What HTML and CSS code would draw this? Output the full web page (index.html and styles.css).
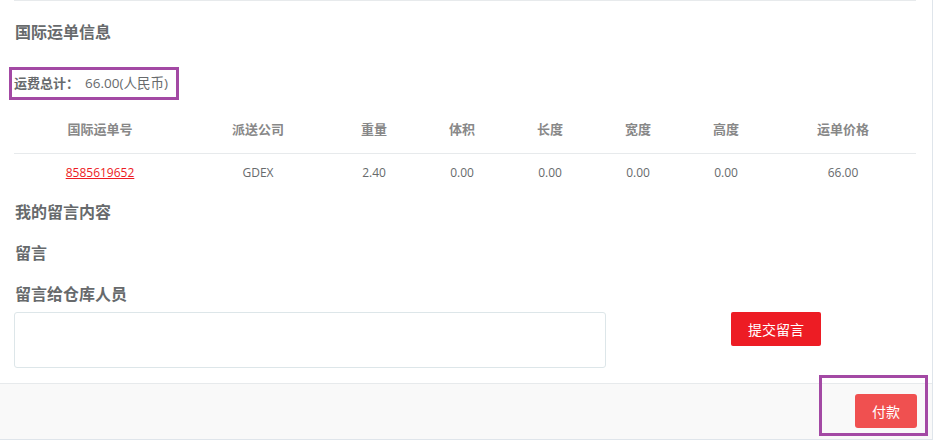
FILE: index.html
```html
<!DOCTYPE html>
<html>
<head>
<meta charset="UTF-8">
<title>国际运单信息</title>
<link rel="stylesheet" href="styles.css">
</head>
<body>

<div id="panel">
	<div class="content">
		<h3 class="first">国际运单信息</h3>
		<p class="total"><b>运费总计：</b><span class="sum">66.00(人民币)</span></p>

		<table class="waybill">
			<thead>
				<tr>
					<th class="c-no">国际运单号</th>
					<th class="c-co">派送公司</th>
					<th class="c-sm">重量</th>
					<th class="c-sm">体积</th>
					<th class="c-sm">长度</th>
					<th class="c-sm">宽度</th>
					<th class="c-sm">高度</th>
					<th class="c-pr">运单价格</th>
				</tr>
			</thead>
			<tbody>
				<tr>
					<td><a href="#">8585619652</a></td>
					<td>GDEX</td>
					<td>2.40</td>
					<td>0.00</td>
					<td>0.00</td>
					<td>0.00</td>
					<td>0.00</td>
					<td>66.00</td>
				</tr>
			</tbody>
		</table>

		<h3>我的留言内容</h3>
		<h3>留言</h3>
		<h3>留言给仓库人员</h3>
		<div class="message">
			<textarea></textarea>
			<button class="btn-submit">提交留言</button>
		</div>
	</div>

	<div class="footer">
		<button class="btn-pay">付款</button>
	</div>
	<!-- marker box drawn over the footer -->
	<div class="mark mark-pay"></div>
</div>

</body>
</html>
```

FILE: styles.css
```css
* {
	box-sizing: border-box;
}
html, body {
	background: #FFF;
	margin: 0;
	padding: 0;
	color: #676a6c;
	font-family: "Open Sans", "Noto Sans CJK SC", sans-serif;
	font-size: 13px;
}
#panel {
	position: relative;
	width: 933px;
	height: 440px;
	border-right: 1px solid #dfe5eb;
	border-bottom: 1px solid #dfe5eb;
}
.content {
	padding: 0 16px 14px 14px;
	height: 383px;
	position: relative;
}
.content:before {
	content: "";
	display: block;
	height: 1px;
	background: #e7eaec;
}
h3 {
	font-size: 16px;
	font-weight: bold;
	line-height: 18px;
	margin: 0 0 23px 1px;
	color: #676a6c;
}
h3.first {
	margin-top: 22px;
	margin-bottom: 26px;
}
.total {
	display: inline-block;
	margin: 0 0 12px -5px;
	padding: 4px 8px 4px 2px;
	border: 3px solid #a349a4;
	line-height: 19px;
}
.total b {
	font-weight: bold;
}
.total .sum {
	margin-left: 6px;
	font-size: 13.5px;
}
table.waybill {
	width: 100%;
	border-collapse: collapse;
	margin-bottom: 13px;
}
.waybill th {
	color: #888;
	font-weight: bold;
	padding: 8px 8px 14px;
	line-height: 19px;
	border-bottom: 1px solid #e7eaec;
	text-align: center;
}
.waybill td {
	padding: 9px 8px 8px;
	line-height: 19px;
	text-align: center;
	font-size: 12px;
}
.c-no { width: 172px; }
.c-co { width: 144px; }
.c-sm { width: 88px; }
.waybill a {
	color: #ed1c24;
}
.message {
	display: flex;
	align-items: flex-start;
	margin-top: -14px;
}
textarea {
	width: 592px;
	height: 56px;
	border: 1px solid #dde6e9;
	border-radius: 3px;
	resize: none;
	font-family: inherit;
}
button {
	border: none;
	color: #FFF;
	font-family: inherit;
	font-size: 14px;
	cursor: pointer;
}
.btn-submit {
	margin-left: 125px;
	width: 90px;
	height: 34px;
	background: #ed1c24;
	border-radius: 2px;
}
.footer {
	height: 56px;
	background: #f9f9f9;
	border-top: 1px solid #e7eaec;
	display: flex;
	justify-content: flex-end;
	padding: 10px 15px 0 0;
}
.btn-pay {
	width: 62px;
	height: 34px;
	background: #f05050;
	border-radius: 3px;
}
.mark {
	position: absolute;
	border: 3px solid #a349a4;
}
.mark-pay {
	left: 819px;
	top: 375px;
	width: 109px;
	height: 61px;
}
```
